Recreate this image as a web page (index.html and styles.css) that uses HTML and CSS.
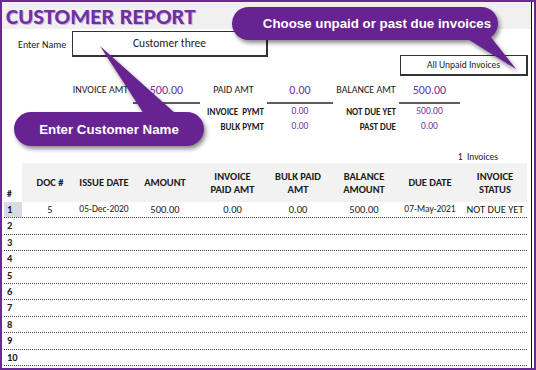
FILE: index.html
```html
<!DOCTYPE html>
<html lang="en">
<head>
    <meta charset="UTF-8">
    <title>Customer Report</title>
    <link rel="stylesheet" href="styles.css">
</head>
<body>
    <div class="sheet">
        <div class="page">
            <div class="title-bar">
                <h1 class="title">CUSTOMER REPORT</h1>
            </div>

            <div class="name-row">
                <span class="name-label">Enter Name</span>
                <div class="name-box">Customer three</div>
            </div>

            <div class="filter-row">
                <div class="filter-box">All Unpaid Invoices</div>
            </div>

            <div class="summary">
                <div class="sum-label">INVOICE AMT</div>
                <div class="sum-value big">500.00</div>
                <div class="sum-label">PAID AMT</div>
                <div class="sum-value big">0.00</div>
                <div class="sum-label">BALANCE AMT</div>
                <div class="sum-value big">500.00</div>

                <div></div>
                <div></div>
                <div class="sub-label">INVOICE&nbsp; PYMT</div>
                <div class="sub-value">0.00</div>
                <div class="sub-label">NOT DUE YET</div>
                <div class="sub-value">500.00</div>

                <div></div>
                <div></div>
                <div class="sub-label">BULK PYMT</div>
                <div class="sub-value">0.00</div>
                <div class="sub-label">PAST DUE</div>
                <div class="sub-value">0.00</div>
            </div>

            <div class="count">1&nbsp;&nbsp;Invoices</div>

            <div class="invoices">
                <div class="inv-head">
                    <div class="head-num">#</div>
                    <div class="head-cell">DOC #</div>
                    <div class="head-cell">ISSUE DATE</div>
                    <div class="head-cell">AMOUNT</div>
                    <div class="head-cell">INVOICE<br>PAID AMT</div>
                    <div class="head-cell">BULK PAID<br>AMT</div>
                    <div class="head-cell">BALANCE<br>AMOUNT</div>
                    <div class="head-cell">DUE DATE</div>
                    <div class="head-cell">INVOICE<br>STATUS</div>
                </div>
                <div id="invBody"></div>
            </div>
        </div>

        <!-- callouts -->
        <svg class="callouts" width="536" height="370" viewBox="0 0 536 370">
            <g class="bubble">
                <rect x="232" y="7" width="266" height="33" rx="16.5"/>
                <polygon points="466,38 490,36 516,69"/>
                <rect x="14" y="112" width="190" height="34" rx="17"/>
                <polygon points="144,114 176,114 100,46"/>
            </g>
            <text class="bubble-text" x="377" y="27.5" text-anchor="middle">Choose unpaid or past due invoices</text>
            <text class="bubble-text" x="109" y="133.5" text-anchor="middle">Enter Customer Name</text>
        </svg>
    </div>

    <script>
        // 发票数据
        const invoices = [
            { doc: '5', issue: '05-Dec-2020', amount: '500.00', paid: '0.00', bulk: '0.00', balance: '500.00', due: '07-May-2021', status: 'NOT DUE YET' }
        ];

        const body = document.getElementById('invBody');
        for (let i = 0; i < 10; i++) {
            const item = invoices[i];
            const row = document.createElement('div');
            row.className = 'inv-row';
            if (item) {
                row.innerHTML = `
                    <div class="row-num filled">${i + 1}</div>
                    <div class="cell">${item.doc}</div>
                    <div class="cell small">${item.issue}</div>
                    <div class="cell">${item.amount}</div>
                    <div class="cell">${item.paid}</div>
                    <div class="cell">${item.bulk}</div>
                    <div class="cell">${item.balance}</div>
                    <div class="cell small">${item.due}</div>
                    <div class="cell">${item.status}</div>
                `;
            } else {
                row.innerHTML = `<div class="row-num">${i + 1}</div>`;
            }
            body.appendChild(row);
        }
    </script>
</body>
</html>
```

FILE: styles.css
```css
* {
    box-sizing: border-box;
}
body {
    margin: 0;
    font-family: Carlito, Lato, 'Liberation Sans', sans-serif;
    color: #1a1a1a;
    background: #fff;
}
.sheet {
    position: relative;
    width: 536px;
    height: 370px;
    border: 2px solid #6a2a94;
    padding-right: 2px;
    overflow: hidden;
}
.page {
    height: 100%;
    border-right: 1px solid #111;
}
.title-bar {
    height: 27px;
    background-color: #f0f0f0;
    padding-left: 4px;
}
.title {
    margin: 0;
    font-size: 23px;
    line-height: 28px;
    font-weight: bold;
    color: #7030a0;
    text-shadow: 1px 1px 0 rgba(170, 120, 215, 0.55);
}
.name-row {
    display: flex;
    align-items: center;
    margin-top: 2px;
    height: 26px;
}
.name-label {
    width: 70px;
    padding-left: 16px;
    font-size: 10px;
    white-space: nowrap;
}
.name-box {
    width: 196px;
    height: 26px;
    border: 1px solid #333;
    border-right-width: 2px;
    border-bottom-width: 2px;
    font-size: 11.5px;
    line-height: 23px;
    text-align: center;
}
.filter-row {
    display: flex;
    justify-content: flex-end;
    margin-top: -2px;
    padding-right: 3px;
}
.filter-box {
    width: 128px;
    height: 21px;
    border: 1px solid #333;
    border-right-width: 2px;
    border-bottom-width: 2px;
    font-size: 9.5px;
    line-height: 18px;
    text-align: center;
}
.summary {
    display: grid;
    grid-template-columns: 65px 67px 67px 66px 66px 61px;
    grid-template-rows: 22px 15px 15px;
    margin-left: 66px;
    margin-top: 6px;
}
.sum-label {
    font-size: 10px;
    text-align: center;
    line-height: 16px;
    white-space: nowrap;
}
.sum-value {
    color: #7030a0;
    text-align: center;
    border-bottom: 2px solid #5f5f5f;
}
.big {
    font-size: 12px;
    line-height: 16px;
}
.sub-label {
    font-size: 9px;
    font-weight: bold;
    text-align: right;
    padding-right: 3px;
    line-height: 15px;
    white-space: nowrap;
}
.sub-value {
    color: #7030a0;
    font-size: 9.5px;
    text-align: center;
    line-height: 15px;
}
.count {
    margin-top: 17px;
    height: 12px;
    font-size: 9.5px;
    line-height: 12px;
    text-align: right;
    padding-right: 33px;
}
.invoices {
    margin-left: 2px;
    width: 523px;
}
.inv-head,
.inv-row {
    display: grid;
    grid-template-columns: 18px 56px 52px 70px 65px 66px 66px 66px 64px;
}
.inv-head {
    height: 39px;
}
.head-num {
    display: flex;
    align-items: flex-end;
    padding: 0 0 2px 3px;
    font-size: 9.5px;
    font-weight: bold;
}
.head-cell {
    display: flex;
    align-items: center;
    justify-content: center;
    text-align: center;
    background-color: #f2f2f2;
    font-size: 10.5px;
    font-weight: bold;
    line-height: 13px;
    white-space: nowrap;
}
.inv-row {
    height: 16.4px;
    border-bottom: 1px dotted #444;
}
.row-num {
    font-size: 10.5px;
    font-weight: bold;
    padding-left: 3px;
    line-height: 15px;
}
.row-num.filled {
    background-color: #d6dce4;
}
.cell {
    font-size: 10.5px;
    text-align: center;
    line-height: 15px;
    white-space: nowrap;
}
.cell.small {
    font-size: 9.5px;
}
.callouts {
    position: absolute;
    top: -2px;
    left: -2px;
    pointer-events: none;
}
.bubble {
    fill: #672391;
    filter: drop-shadow(2px 3px 2px rgba(0, 0, 0, 0.45));
}
.bubble-text {
    fill: #fff;
    font-family: 'Liberation Sans', Arial, sans-serif;
    font-size: 13.3px;
    font-weight: bold;
}
```
